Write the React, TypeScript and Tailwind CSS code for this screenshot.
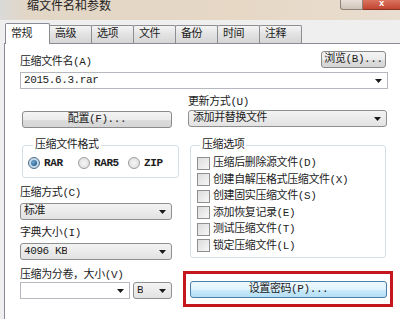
import React from 'react';

const TABS = ['常规', '高级', '选项', '文件', '备份', '时间', '注释'] as const;

const OPTIONS = [
  '压缩后删除源文件(D)',
  '创建自解压格式压缩文件(X)',
  '创建固实压缩文件(S)',
  '添加恢复记录(E)',
  '测试压缩文件(T)',
  '锁定压缩文件(L)',
];

function Arrow() {
  return (
    <svg width="7" height="4" viewBox="0 0 7 4" className="shrink-0">
      <path d="M0 0h7L3.5 4z" fill="#1a1a1a" />
    </svg>
  );
}

function Combo({ text, list, className = '' }: { text?: string; list?: boolean; className?: string }) {
  return (
    <div
      className={`flex h-[17px] items-center justify-between pl-[3px] pr-[5px] border ${
        list
          ? 'rounded-[3px] border-[#8e8f8f] bg-[linear-gradient(#f3f3f3,#e2e2e2)]'
          : 'border-[#b5b8bf] bg-white'
      } ${className}`}
    >
      <span className="truncate leading-[15px]">{text}</span>
      <Arrow />
    </div>
  );
}

function Button({ children, className = '' }: { children: React.ReactNode; className?: string }) {
  return (
    <div
      className={`flex h-[17px] items-center justify-center rounded-[3px] border border-[#8a8a8a] bg-[linear-gradient(#f4f4f4_0%,#ebebeb_50%,#dcdcdc_51%,#d6d6d6_100%)] leading-[15px] ${className}`}
    >
      {children}
    </div>
  );
}

function Radio({ label, checked }: { label: string; checked?: boolean }) {
  return (
    <div className="flex w-[50px] items-center gap-[4px]">
      <span
        className={`flex h-[12px] w-[12px] items-center justify-center rounded-full border ${
          checked ? 'border-[#4d6f8c] bg-[radial-gradient(circle,#dbe9f3,#b6cde0)]' : 'border-[#9c9c9c] bg-[radial-gradient(circle,#f6f6f6,#dadada)]'
        }`}
      >
        {checked && <span className="h-[6px] w-[6px] rounded-full bg-[radial-gradient(circle_at_35%_35%,#6fa9d6,#1d4f78)]" />}
      </span>
      <span className="font-bold leading-[14px]">{label}</span>
    </div>
  );
}

function Check({ label }: { label: string }) {
  return (
    <div className="flex h-[16.5px] items-center gap-[3px]">
      <span className="h-[13px] w-[13px] shrink-0 border border-[#8f8f8f] bg-[linear-gradient(135deg,#dcdcdc,#f7f7f7)]" />
      <span className="leading-[14px]">{label}</span>
    </div>
  );
}

export default function App() {
  return (
    <div className="relative h-[319px] w-[400px] overflow-hidden bg-[#efefef] font-['Liberation_Mono','Noto_Sans_CJK_SC',monospace] text-[11px] tracking-[-0.4px] text-[#1c1c1c]">
      {/* title bar */}
      <div className="flex h-[20px] items-start bg-[linear-gradient(90deg,#dadad8_0%,#e2d6c6_7%,#e6d8c5_60%,#e9ddd0_100%)]">
        <div className="ml-[27px] mt-[1px] text-[12px] leading-[12px] tracking-normal text-[#222]">缩文件名和参数</div>
        <div className="ml-auto flex">
          <div className="h-[10px] w-[23px] rounded-bl-[3px] border border-t-0 border-[#8d8178] bg-[linear-gradient(#e8dfd8,#cfc3b9)]" />
          <div className="flex h-[10px] w-[37px] items-end justify-center border-b border-[#8a3426] bg-[linear-gradient(#d9745f,#c24632)] text-[9px] leading-[9px] font-bold text-white">
            x
          </div>
        </div>
      </div>

      {/* tabs */}
      <div className="flex items-end pl-[5px] pt-[3px]">
        {TABS.map((t, i) =>
          i === 0 ? (
            <div
              key={t}
              className="relative z-10 -mb-px h-[21px] w-[45px] rounded-t-[2px] border border-b-0 border-[#898c95] bg-white pl-[5px] pt-[4px] leading-[13px]"
            >
              {t}
            </div>
          ) : (
            <div
              key={t}
              className="-ml-px h-[18px] w-[43px] rounded-t-[2px] border border-b-0 border-[#8c8e94] bg-[linear-gradient(#f4f4f4,#e2e2e2_50%,#d6d6d6)] pl-[5px] pt-[2px] leading-[13px]"
            >
              {t}
            </div>
          ),
        )}
      </div>

      {/* panel */}
      <div className="ml-[4px] h-[300px] border-l border-t border-[#898c95] bg-white pl-[15px] pr-[11px] pt-[7px]">
        <div className="flex items-end justify-between">
          <div className="leading-[12px]">压缩文件名(A)</div>
          <Button className="mr-[3px] w-[65px]">浏览(B)...</Button>
        </div>
        <Combo text="2015.6.3.rar" className="mt-[4px] w-[368px]" />

        <div className="mt-[6px] grid grid-cols-[152px_200px] gap-x-[16px]">
          {/* left column */}
          <div className="flex flex-col">
            <Button className="ml-[2px] mt-[16px] w-[150px]">配置(F)...</Button>
            <fieldset className="ml-[2px] mt-[11px] w-[150px] rounded-[3px] border border-[#d5dfe5] pb-[7px] pl-[5px] pt-[5px]">
              <legend className="ml-[5px] px-[2px] leading-[12px]">压缩文件格式</legend>
              <div className="flex">
                <Radio label="RAR" checked />
                <Radio label="RAR5" />
                <Radio label="ZIP" />
              </div>
            </fieldset>
            <div className="mt-[9px] leading-[12px]">压缩方式(C)</div>
            <Combo list text="标准" className="mt-[4px] w-[152px]" />
            <div className="mt-[7px] leading-[12px]">字典大小(I)</div>
            <Combo list text="4096 KB" className="mt-[4px] w-[152px]" />
            <div className="mt-[9px] leading-[12px]">压缩为分卷，大小(V)</div>
            <div className="mt-[1px] flex gap-[3px]">
              <Combo className="w-[110px]" />
              <Combo list text="B" className="w-[39px]" />
            </div>
          </div>

          {/* right column */}
          <div className="flex flex-col">
            <div className="mt-[1px] leading-[12px]">更新方式(U)</div>
            <Combo list text="添加并替换文件" className="mt-[2px] w-[199px] pl-[4px]" />
            <fieldset className="ml-[2px] mt-[12px] w-[196px] rounded-[3px] border border-[#d5dfe5] pb-[3px] pl-[6px] pt-[4px]">
              <legend className="ml-[3px] px-[2px] leading-[12px]">压缩选项</legend>
              {OPTIONS.map((o) => (
                <Check key={o} label={o} />
              ))}
            </fieldset>
            <div className="-mx-[5px] mt-[13px] w-[210px] border-[3px] border-[#c4161c] pb-[6px] pl-[4px] pr-[3px] pt-[7px]">
              <div className="flex h-[17px] items-center justify-center rounded-[3px] border border-[#4a7fa8] bg-[linear-gradient(#eef8fd_0%,#e0f3fc_50%,#c9ebfc_51%,#b4def5_100%)] leading-[15px]">
                设置密码(P)...
              </div>
            </div>
          </div>
        </div>
      </div>
    </div>
  );
}
